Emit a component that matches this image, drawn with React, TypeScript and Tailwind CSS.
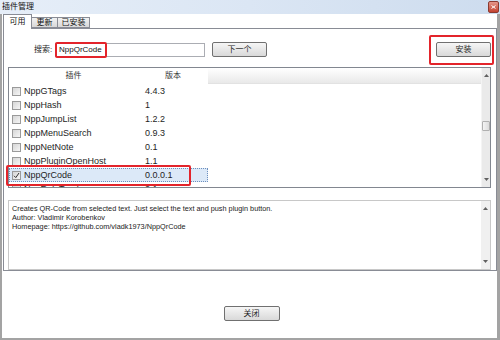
import React from 'react';

const font = "font-['Liberation_Sans','Noto_Sans_CJK_SC',sans-serif]";

const plugins = [
  { name: 'NppGTags', ver: '4.4.3' },
  { name: 'NppHash', ver: '1' },
  { name: 'NppJumpList', ver: '1.2.2' },
  { name: 'NppMenuSearch', ver: '0.9.3' },
  { name: 'NppNetNote', ver: '0.1' },
  { name: 'NppPluginOpenHost', ver: '1.1' },
  { name: 'NppQrCode', ver: '0.0.0.1', selected: true },
  { name: 'NppRefsTracker', ver: '2.1' },
];

// Little arrow for the scrollbars
const Arrow = ({ up }: { up?: boolean }) => (
  <svg width="5" height="3" viewBox="0 0 5 3" className="block">
    <path d={up ? 'M0 3L2.5 0L5 3Z' : 'M0 0L2.5 3L5 0Z'} fill="#606060" />
  </svg>
);

const Btn = ({ label, className = '' }: { label: string; className?: string }) => (
  <div
    className={`h-[15px] w-[55px] flex items-center justify-center rounded-[2px] border border-[#707070] bg-gradient-to-b from-[#f6f6f6] to-[#d9d9d9] text-[8px] leading-none text-[#1e1e1e] ${className}`}
  >
    {label}
  </div>
);

export default function App() {
  return (
    <div className={`${font} relative w-[500px] h-[340px] bg-white overflow-hidden`}>
      {/* Title bar */}
      <div className="h-[14px] flex items-center justify-between bg-gradient-to-r from-[#e6eef8] via-[#dbe6f4] to-[#cddcee] pl-[2px] pr-[1px]">
        <span className="text-[8px] leading-none text-[#111]">插件管理</span>
        <div className="w-[11px] h-[12px] rounded-[2px] bg-gradient-to-b from-[#e4968a] to-[#c3402e] border border-[#8b3a30] flex items-center justify-center">
          <svg width="5" height="4" viewBox="0 0 5 4">
            <path d="M0.5 0.5L4.5 3.5M4.5 0.5L0.5 3.5" stroke="#fff" strokeWidth="1" />
          </svg>
        </div>
      </div>

      {/* Window body */}
      <div className="h-[326px] border-l-2 border-r-[3px] border-b-2 border-[#a3a3a3] flex flex-col">
        {/* Tabs */}
        <div className="h-[14px] flex items-end pl-[1px] relative z-10">
          <div className="h-[15px] w-[29px] border border-b-0 border-[#898c95] bg-white text-[8px] leading-none flex items-center justify-center text-[#111] -mb-px">
            可用
          </div>
          <div className="h-[11px] w-[26px] border border-l-0 border-[#898c95] bg-gradient-to-b from-[#f2f2f2] to-[#d8d8d8] text-[8px] leading-none flex items-center justify-center text-[#111]">
            更新
          </div>
          <div className="h-[11px] w-[32px] border border-l-0 border-[#898c95] bg-gradient-to-b from-[#f2f2f2] to-[#d8d8d8] text-[8px] leading-none flex items-center justify-center text-[#111]">
            已安装
          </div>
        </div>

        {/* Tab panel */}
        <div className="ml-[1px] w-[494px] h-[243px] border border-[#898c95] pl-[4px] pr-[5px] flex flex-col">
          {/* Search row */}
          <div className="mt-[13px] h-[15px] flex items-center">
            <span className="ml-[26px] w-[21px] text-[8px] leading-none text-[#1e1e1e]">搜索:</span>
            <div className="w-[150px] h-[14px] border border-[#abadb3] bg-white flex items-center pl-[3px] text-[8px] leading-none text-[#111]">
              NppQrCode
            </div>
            <Btn label="下一个" className="ml-[7px]" />
            <div className="flex-1" />
            <Btn label="安装" />
          </div>

          {/* Plugin list */}
          <div className="mt-[10px] h-[121px] border border-[#828790] flex overflow-hidden">
            <div className="flex-1 flex flex-col overflow-hidden">
              <div className="h-[16px] flex shrink-0">
                <div className="w-[129px] flex items-center justify-center text-[8px] leading-none text-[#333]">插件</div>
                <div className="w-[70px] flex items-center justify-center text-[8px] leading-none text-[#333]">版本</div>
                <div className="flex-1 bg-gradient-to-b from-white via-[#f4f4f4] to-[#e9e9e9] border-b border-[#e2e2e2]" />
              </div>
              {plugins.map((p) => (
                <div
                  key={p.name}
                  className={`h-[14px] w-[199px] shrink-0 flex items-center text-[9px] leading-none text-[#1e1e1e] ${
                    p.selected ? 'bg-[#dce9f8] border border-dotted border-[#6d8fbd]' : 'border border-transparent'
                  }`}
                >
                  <div className="ml-[2px] w-[9px] h-[9px] border border-[#9a9a9a] bg-gradient-to-br from-[#d6d6d6] to-[#f6f6f6] flex items-center justify-center">
                    {p.selected && (
                      <svg width="7" height="7" viewBox="0 0 7 7">
                        <path d="M1 3.8L2.8 5.6L6 1" fill="none" stroke="#333" strokeWidth="1" />
                      </svg>
                    )}
                  </div>
                  <span className="ml-[3px] w-[120px]">{p.name}</span>
                  <span className="ml-[1px]">{p.ver}</span>
                </div>
              ))}
            </div>
            {/* Scrollbar */}
            <div className="w-[9px] bg-[#eaeaea] border-l border-[#f4f4f4] flex flex-col items-center justify-between py-[6px]">
              <Arrow up />
              <div className="w-[8px] h-[10px] border border-[#b0b0b0] bg-gradient-to-r from-[#f4f4f4] to-[#dcdcdc] rounded-[1px] mt-[44px]" />
              <div className="flex-1" />
              <Arrow />
            </div>
          </div>

          {/* Description */}
          <div className="mt-[12px] h-[70px] border border-[#c8c8c8] flex">
            <div className="flex-1 pl-[3px] pt-[3px] text-[7.3px] leading-[9px] text-[#222]">
              <div>Creates QR-Code from selected text. Just select the text and push plugin button.</div>
              <div>Author: Vladimir Korobenkov</div>
              <div>Homepage: https://github.com/vladk1973/NppQrCode</div>
            </div>
            <div className="w-[9px] bg-[#f0f0f0] flex flex-col items-center justify-between py-[6px]">
              <Arrow up />
              <Arrow />
            </div>
          </div>
        </div>

        {/* Close button */}
        <div className="mt-[35px] flex justify-center pl-[4px]">
          <Btn label="关闭" className="w-[56px]" />
        </div>
      </div>

      {/* Red annotation boxes */}
      <div className="absolute left-[55px] top-[42px] w-[52px] h-[16px] border-2 border-[#e3242b] rounded-[2px]" />
      <div className="absolute left-[429px] top-[35px] w-[65px] h-[30px] border-2 border-[#e3242b] rounded-[2px]" />
      <div className="absolute left-[6px] top-[165px] w-[185px] h-[21px] border-2 border-[#e3242b] rounded-[2px]" />
    </div>
  );
}
